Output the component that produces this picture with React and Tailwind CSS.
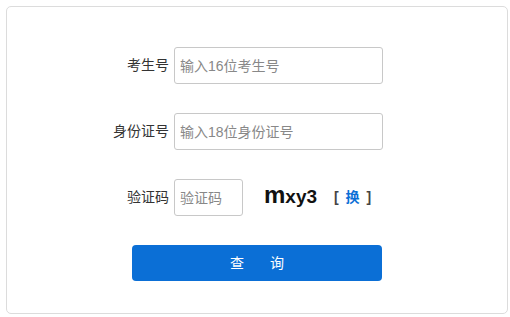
import React from 'react'

const font = { fontFamily: '"Liberation Sans", "Noto Sans CJK SC", sans-serif' }

const Row = ({ label, children }) => (
    <div className="flex items-center h-[37px]">
        <div className="w-[167px] pr-[5px] text-right text-[14px] text-[#333]">{label}</div>
        {children}
    </div>
)

export default function App() {
    return (
        <div className="w-[510px] h-[317px] bg-white pt-[6px] pl-[6px]" style={font}>
            <div className="w-[502px] h-[308px] border border-[#dcdcdc] rounded-[5px] pt-[40px]">
                <div className="flex flex-col gap-[29px]">
                    <Row label="考生号">
                        <input
                            placeholder="输入16位考生号"
                            className="w-[209px] h-[37px] border border-[#c8c8c8] rounded-[3px] px-[5px] text-[14px] placeholder:text-[#888] outline-none"
                        />
                    </Row>
                    <Row label="身份证号">
                        <input
                            placeholder="输入18位身份证号"
                            className="w-[209px] h-[37px] border border-[#c8c8c8] rounded-[3px] px-[5px] text-[14px] placeholder:text-[#888] outline-none"
                        />
                    </Row>
                    <Row label="验证码">
                        <input
                            placeholder="验证码"
                            className="w-[69px] h-[37px] border border-[#c8c8c8] rounded-[3px] px-[5px] text-[14px] placeholder:text-[#888] outline-none"
                        />
                        <div className="ml-[21px] flex items-baseline font-bold text-[#111] -mt-[6px]">
                            <span className="text-[24px] leading-none">m</span>
                            <span className="text-[19px] leading-none">xy3</span>
                        </div>
                        <div className="ml-[17px] text-[14px] font-bold text-[#444]">
                            [ <span className="text-[#0b6fd6] mx-[3px]">换</span> ]
                        </div>
                    </Row>
                    <div className="pl-[125px]">
                        <button className="w-[250px] h-[36px] bg-[#0b6fd6] rounded-[4px] text-white text-[14px] flex items-center justify-center gap-[26px]">
                            <span>查</span>
                            <span>询</span>
                        </button>
                    </div>
                </div>
            </div>
        </div>
    )
}
